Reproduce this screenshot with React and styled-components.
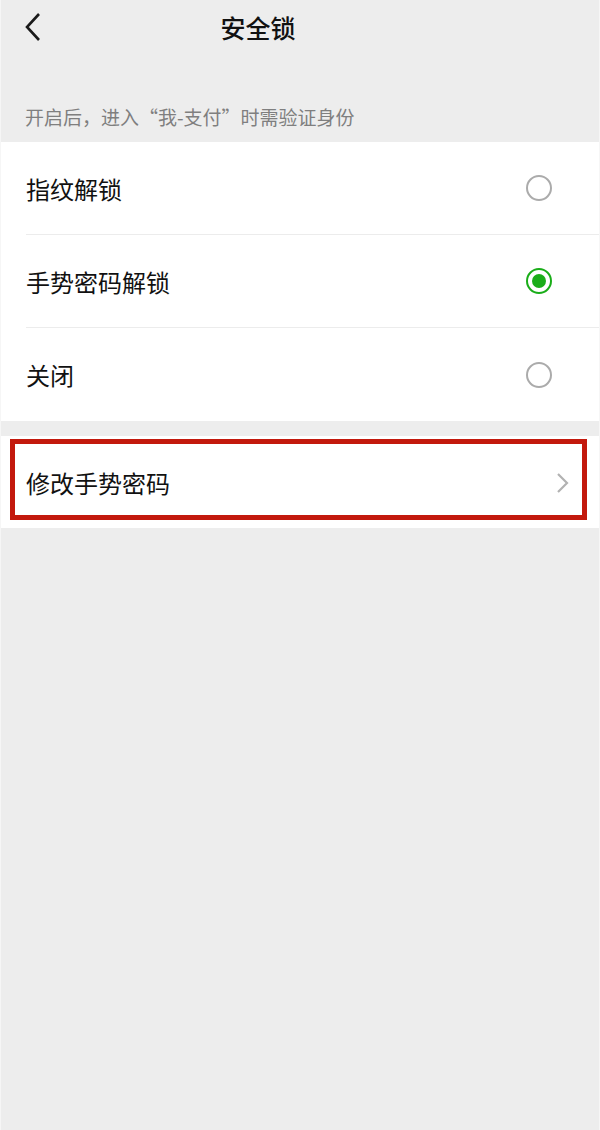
import React from "react";
import styled, { createGlobalStyle } from "styled-components";

const GlobalStyle = createGlobalStyle`
  html, body {
    margin: 0;
    padding: 0;
    background: #ededed;
  }
  body {
    font-family: "Noto Sans CJK SC", "Noto Sans", sans-serif;
  }
`;

const options = [
  { label: "指纹解锁", checked: false },
  { label: "手势密码解锁", checked: true },
  { label: "关闭", checked: false },
];

export default function App() {
  return (
    <>
      <GlobalStyle />
      <Page>
        <Header>
          <BackButton>
            <svg width="18" height="30" viewBox="0 0 18 30">
              <path d="M15 2 L3 15 L15 28" fill="none" stroke="#1a1a1a" strokeWidth="2.6" />
            </svg>
          </BackButton>
          <Title>安全锁</Title>
        </Header>
        <Hint>开启后，进入“我-支付”时需验证身份</Hint>
        <Card>
          {options.map((o, i) => (
            <OptionRow key={o.label} last={i === options.length - 1}>
              <Label>{o.label}</Label>
              <Radio checked={o.checked} />
            </OptionRow>
          ))}
        </Card>
        <LinkCard>
          <Highlight>
            <Label>修改手势密码</Label>
            <svg width="14" height="22" viewBox="0 0 14 22">
              <path d="M2 2 L11 11 L2 20" fill="none" stroke="#b2b2b2" strokeWidth="2.2" />
            </svg>
          </Highlight>
        </LinkCard>
      </Page>
    </>
  );
}

const Page = styled.div`
  min-height: 1130px;
  background: #ededed;
  border-left: 1px solid #f6f6f6;
  border-right: 1px solid #f6f6f6;
  box-sizing: border-box;
`;

const Header = styled.div`
  height: 56px;
  display: flex;
  align-items: center;
  justify-content: center;
  padding-right: 84px;
  position: relative;
`;

const BackButton = styled.div`
  position: absolute;
  left: 23px;
  top: 12px;
  display: flex;
`;

const Title = styled.div`
  font-size: 25px;
  font-weight: 500;
  color: #111;
  margin-top: -2px;
`;

const Hint = styled.div`
  padding: 48px 0 0 24px;
  height: 38px;
  box-sizing: content-box;
  font-size: 19px;
  line-height: 26px;
  color: #7f7f7f;
`;

const Card = styled.div`
  background: #fff;
  margin-bottom: 15px;
`;

const OptionRow = styled.div`
  height: 93px;
  margin-left: 25px;
  padding-right: 47px;
  display: flex;
  align-items: center;
  justify-content: space-between;
  border-bottom: ${(p) => (p.last ? "none" : "1px solid #ececec")};
  box-sizing: border-box;
`;

const Label = styled.div`
  font-size: 24px;
  color: #111;
`;

const Radio = styled.div`
  width: 26px;
  height: 26px;
  border-radius: 50%;
  box-sizing: border-box;
  border: 2px solid ${(p) => (p.checked ? "#1aad19" : "#ababab")};
  position: relative;
  &::after {
    content: "";
    display: ${(p) => (p.checked ? "block" : "none")};
    position: absolute;
    left: 4px;
    top: 4px;
    width: 14px;
    height: 14px;
    border-radius: 50%;
    background: #1aad19;
  }
`;

const LinkCard = styled.div`
  background: #fff;
  height: 92px;
  padding: 3px 12px 0 9px;
  box-sizing: border-box;
`;

const Highlight = styled.div`
  height: 81px;
  border: 5px solid #c3190d;
  box-sizing: border-box;
  display: flex;
  align-items: center;
  justify-content: space-between;
  padding: 6px 12px 0 11px;
`;
